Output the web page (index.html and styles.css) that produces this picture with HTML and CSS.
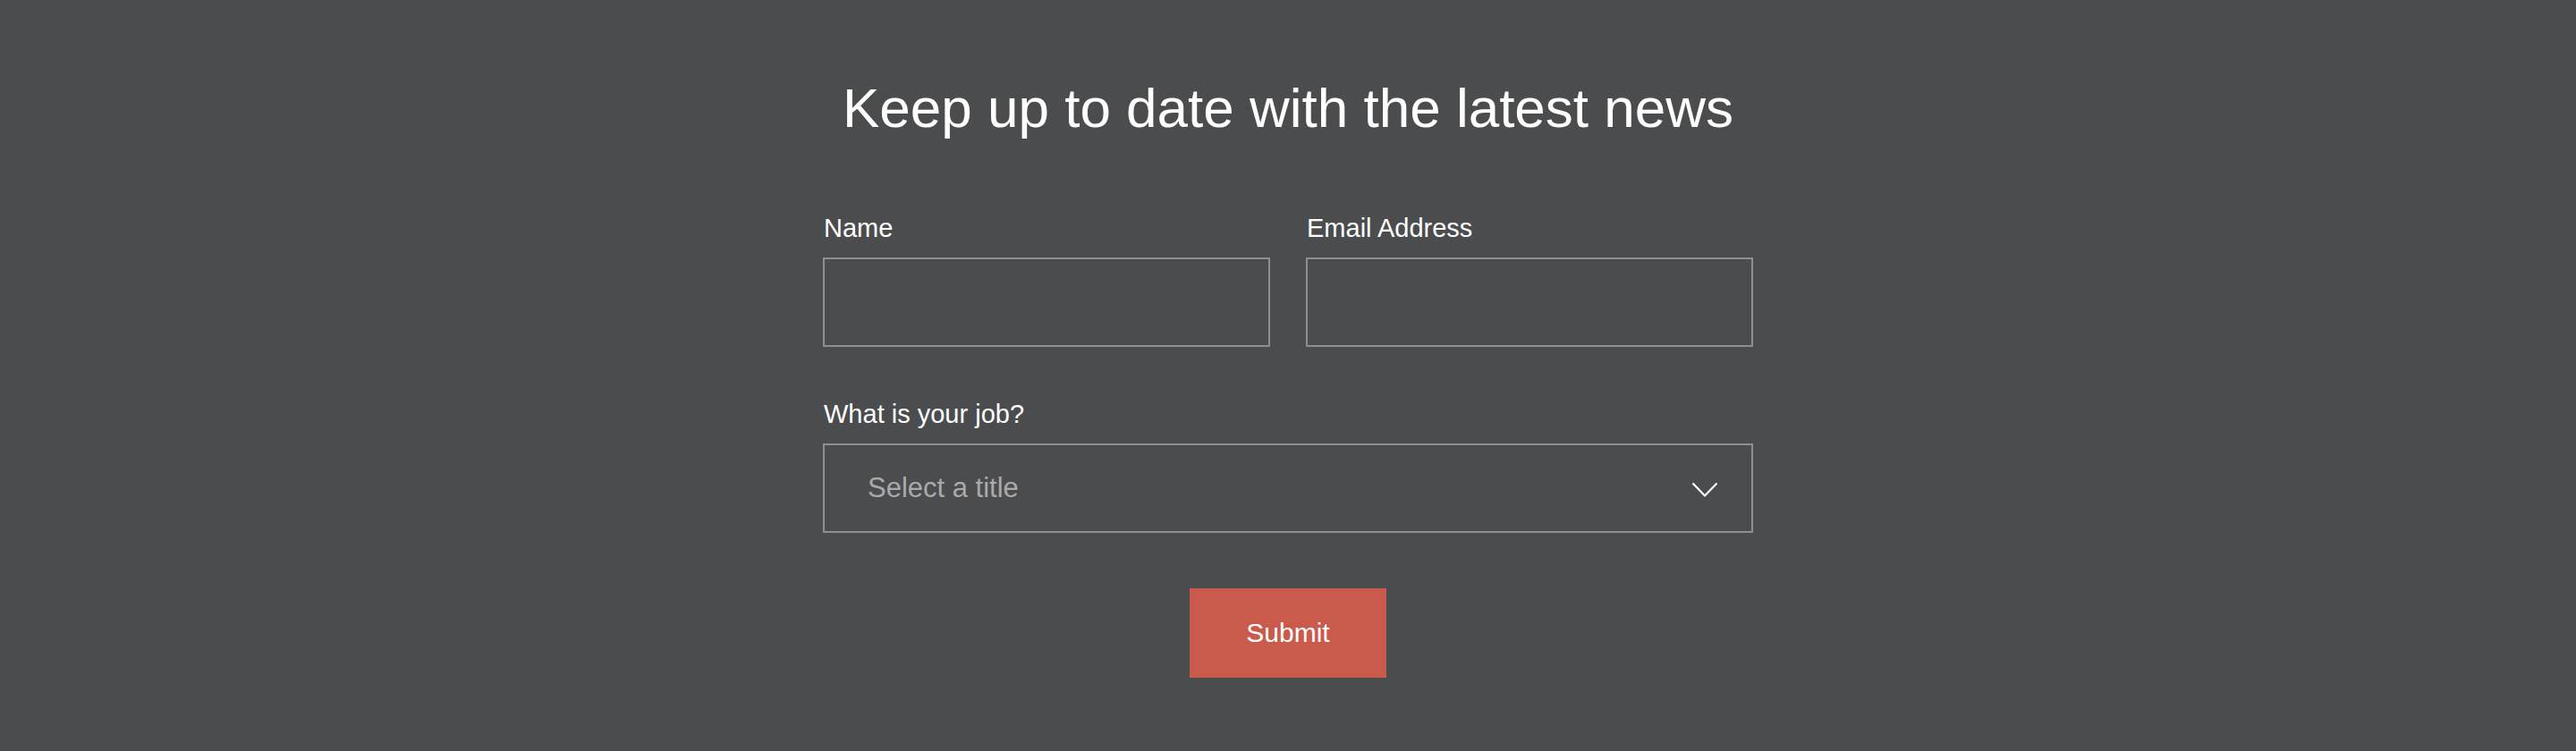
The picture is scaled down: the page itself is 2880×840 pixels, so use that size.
FILE: index.html
```html
<!DOCTYPE html>
<html lang="en">
<head>
<meta charset="utf-8">
<title>Newsletter</title>
<link rel="stylesheet" href="styles.css">
</head>
<body>
<section class="signup">
  <h1 class="signup-title">Keep up to date with the latest news</h1>
  <form class="signup-form">
    <div class="row">
      <label class="field">
        <span class="field-label">Name</span>
        <span class="input"></span>
      </label>
      <label class="field">
        <span class="field-label">Email Address</span>
        <span class="input"></span>
      </label>
    </div>
    <label class="field">
      <span class="field-label">What is your job?</span>
      <span class="input select">
        <span class="placeholder">Select a title</span>
        <svg class="chevron" width="30" height="18" viewBox="0 0 30 18"><path d="M1.5 1.5 L15 15.5 L28.5 1.5" fill="none" stroke="#ffffff" stroke-width="2.2"/></svg>
      </span>
    </label>
    <div class="actions">
      <span class="submit">Submit</span>
    </div>
  </form>
</section>
</body>
</html>
```
FILE: styles.css
```css
html, body {
  margin: 0;
  padding: 0;
  background: #4b4c4e;
  height: 100%;
}
body {
  font-family: "Liberation Sans", Arial, sans-serif;
  color: #ffffff;
}
.signup {
  padding-top: 90px;
}
.signup-title {
  margin: 0 0 86px;
  font-weight: 400;
  font-size: 62px;
  line-height: 62px;
  text-align: center;
  white-space: nowrap;
}
.signup-form {
  width: 1040px;
  margin: 0 auto;
  display: flex;
  flex-direction: column;
  gap: 58px;
}
.row {
  display: flex;
  gap: 40px;
}
.field {
  flex: 1;
  display: flex;
  flex-direction: column;
  gap: 16px;
}
.field-label {
  font-size: 29px;
  line-height: 34px;
  padding-left: 1px;
}
.input {
  height: 96px;
  border: 2px solid #8e8f90;
  box-sizing: content-box;
}
.select {
  display: flex;
  align-items: center;
  justify-content: space-between;
  padding: 0 37px 0 48px;
}
.placeholder {
  font-size: 31px;
  color: #a9aaab;
}
.chevron {
  margin-top: 4px;
}
.actions {
  display: flex;
  justify-content: center;
  padding-top: 4px;
}
.submit {
  width: 220px;
  height: 100px;
  background: #c95a4c;
  display: flex;
  align-items: center;
  justify-content: center;
  font-size: 30px;
}
```
